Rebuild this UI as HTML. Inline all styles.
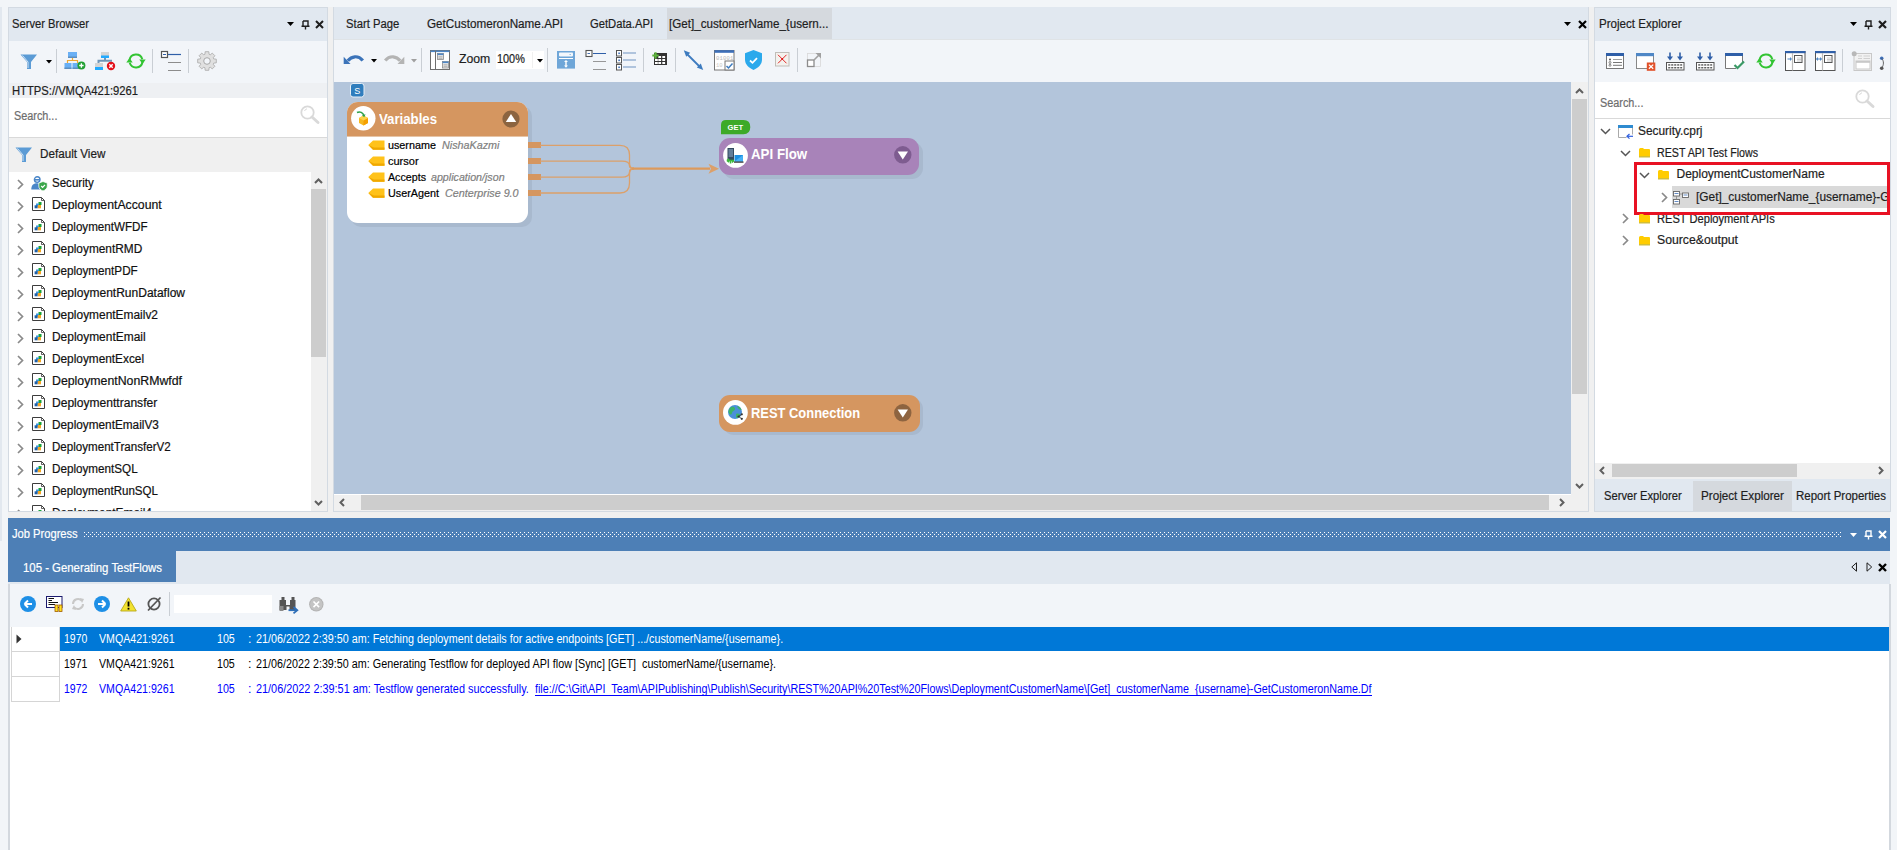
<!DOCTYPE html>
<html><head><meta charset="utf-8">
<style>
*{box-sizing:border-box;margin:0;padding:0}
html,body{width:1897px;height:850px;overflow:hidden;background:#f0f0f0;font-family:"Liberation Sans",sans-serif;font-size:12px;color:#1e1e1e;position:relative}
.a{position:absolute}
.t{position:absolute;white-space:pre}
svg{position:absolute;overflow:visible}
</style></head><body>
<div class="a" style="left:0px;top:0px;width:1897px;height:850px;background:#f2f5f8;"></div>
<div class="a" style="left:0px;top:7px;width:2px;height:534px;background:#e2e8ef;"></div>
<div class="a" style="left:8px;top:512px;width:1882px;height:6px;background:#f0f0f0;"></div>
<div class="a" style="left:328px;top:7px;width:5px;height:505px;background:#f0f0f0;"></div>
<div class="a" style="left:1589px;top:7px;width:5px;height:505px;background:#f0f0f0;"></div>
<div class="a" style="left:8px;top:7px;width:320px;height:505px;background:#f0f0f0;border:1px solid #d3dae2"></div>
<div class="a" style="left:9px;top:8px;width:318px;height:33px;background:#e1e8f0;"></div>
<div class="a" style="left:9px;top:41px;width:318px;height:42px;background:#f2f5f9;"></div>
<div class="a" style="left:9px;top:83px;width:318px;height:15px;background:#eef0f3;"></div>
<div class="a" style="left:9px;top:98px;width:318px;height:39px;background:#ffffff;"></div>
<div class="a" style="left:9px;top:137px;width:318px;height:1px;background:#d9d9d9;"></div>
<div class="a" style="left:9px;top:138px;width:318px;height:34px;background:#f0f0f0;"></div>
<div class="a" style="left:9px;top:172px;width:302px;height:339px;background:#ffffff;"></div>
<div class="a" style="left:311px;top:172px;width:16px;height:339px;background:#f0f0f0;"></div>
<div class="a" style="left:311px;top:189px;width:15px;height:168px;background:#cdcdcd;"></div>
<div class="t" style="left:12.00px;top:17.84px;font-size:12px;line-height:12px;color:#1e1e1e;-webkit-text-stroke:0.2px currentColor;transform:scaleX(0.9312);transform-origin:0 0;">Server Browser</div>
<div class="t" style="left:12.00px;top:84.84px;font-size:12px;line-height:12px;color:#1e1e1e;-webkit-text-stroke:0.2px currentColor;transform:scaleX(0.9352);transform-origin:0 0;">HTTPS://VMQA421:9261</div>
<div class="t" style="left:14.30px;top:109.84px;font-size:12px;line-height:12px;color:#6d6d6d;-webkit-text-stroke:0.2px currentColor;transform:scaleX(0.9036);transform-origin:0 0;">Search...</div>
<div class="t" style="left:40.40px;top:148.14px;font-size:12px;line-height:12px;color:#1e1e1e;-webkit-text-stroke:0.2px currentColor;transform:scaleX(0.9738);transform-origin:0 0;">Default View</div>
<div class="a" style="left:0;top:0;width:1897px;height:850px;clip-path:inset(172px 1586px 339px 9px)">
<div class="t" style="left:52.20px;top:177.24px;font-size:12px;line-height:12px;color:#111111;-webkit-text-stroke:0.2px currentColor;transform:scaleX(0.9617);transform-origin:0 0;">Security</div>
<div class="t" style="left:52.20px;top:199.24px;font-size:12px;line-height:12px;color:#111111;-webkit-text-stroke:0.2px currentColor;transform:scaleX(1.0215);transform-origin:0 0;">DeploymentAccount</div>
<div class="t" style="left:52.20px;top:221.24px;font-size:12px;line-height:12px;color:#111111;-webkit-text-stroke:0.2px currentColor;transform:scaleX(0.9687);transform-origin:0 0;">DeploymentWFDF</div>
<div class="t" style="left:52.20px;top:243.24px;font-size:12px;line-height:12px;color:#111111;-webkit-text-stroke:0.2px currentColor;transform:scaleX(0.9873);transform-origin:0 0;">DeploymentRMD</div>
<div class="t" style="left:52.20px;top:265.24px;font-size:12px;line-height:12px;color:#111111;-webkit-text-stroke:0.2px currentColor;transform:scaleX(0.9735);transform-origin:0 0;">DeploymentPDF</div>
<div class="t" style="left:52.20px;top:287.24px;font-size:12px;line-height:12px;color:#111111;-webkit-text-stroke:0.2px currentColor;transform:scaleX(1.0020);transform-origin:0 0;">DeploymentRunDataflow</div>
<div class="t" style="left:52.20px;top:309.24px;font-size:12px;line-height:12px;color:#111111;-webkit-text-stroke:0.2px currentColor;transform:scaleX(0.9933);transform-origin:0 0;">DeploymentEmailv2</div>
<div class="t" style="left:52.20px;top:331.24px;font-size:12px;line-height:12px;color:#111111;-webkit-text-stroke:0.2px currentColor;transform:scaleX(0.9952);transform-origin:0 0;">DeploymentEmail</div>
<div class="t" style="left:52.20px;top:353.24px;font-size:12px;line-height:12px;color:#111111;-webkit-text-stroke:0.2px currentColor;transform:scaleX(0.9853);transform-origin:0 0;">DeploymentExcel</div>
<div class="t" style="left:52.20px;top:375.24px;font-size:12px;line-height:12px;color:#111111;-webkit-text-stroke:0.2px currentColor;transform:scaleX(1.0259);transform-origin:0 0;">DeploymentNonRMwfdf</div>
<div class="t" style="left:52.20px;top:397.24px;font-size:12px;line-height:12px;color:#111111;-webkit-text-stroke:0.2px currentColor;transform:scaleX(1.0046);transform-origin:0 0;">Deploymenttransfer</div>
<div class="t" style="left:52.20px;top:419.24px;font-size:12px;line-height:12px;color:#111111;-webkit-text-stroke:0.2px currentColor;transform:scaleX(0.9824);transform-origin:0 0;">DeploymentEmailV3</div>
<div class="t" style="left:52.20px;top:441.24px;font-size:12px;line-height:12px;color:#111111;-webkit-text-stroke:0.2px currentColor;transform:scaleX(0.9654);transform-origin:0 0;">DeploymentTransferV2</div>
<div class="t" style="left:52.20px;top:463.24px;font-size:12px;line-height:12px;color:#111111;-webkit-text-stroke:0.2px currentColor;transform:scaleX(0.9733);transform-origin:0 0;">DeploymentSQL</div>
<div class="t" style="left:52.20px;top:485.24px;font-size:12px;line-height:12px;color:#111111;-webkit-text-stroke:0.2px currentColor;transform:scaleX(0.9631);transform-origin:0 0;">DeploymentRunSQL</div>
<div class="t" style="left:52.20px;top:507.24px;font-size:12px;line-height:12px;color:#111111;-webkit-text-stroke:0.2px currentColor;transform:scaleX(0.9929);transform-origin:0 0;">DeploymentEmail4</div>
</div>
<div class="a" style="left:333px;top:7px;width:256px;height:505px;background:#f0f0f0;width:1256px;border:1px solid #d3dae2;border-top:none"></div>
<div class="a" style="left:334px;top:7px;width:1254px;height:33px;background:#e1e8f0;"></div>
<div class="a" style="left:334px;top:39px;width:1254px;height:1px;background:#dfe3e6;"></div>
<div class="a" style="left:667px;top:8px;width:165px;height:31px;background:#d5d9de;"></div>
<div class="a" style="left:334px;top:40px;width:1254px;height:42px;background:#f2f5f9;"></div>
<div class="a" style="left:334px;top:82px;width:1237px;height:412px;background:#b3c5db;"></div>
<div class="a" style="left:334px;top:494px;width:1237px;height:1px;background:#ffffff;"></div>
<div class="a" style="left:1571px;top:82px;width:17px;height:429px;background:#f0f0f0;"></div>
<div class="a" style="left:1572px;top:99px;width:15px;height:295px;background:#cdcdcd;"></div>
<div class="a" style="left:334px;top:495px;width:1237px;height:16px;background:#f0f0f0;"></div>
<div class="a" style="left:361px;top:495px;width:1188px;height:15px;background:#cdcdcd;"></div>
<div class="t" style="left:345.90px;top:17.84px;font-size:12px;line-height:12px;color:#1e1e1e;-webkit-text-stroke:0.2px currentColor;transform:scaleX(0.9382);transform-origin:0 0;">Start Page</div>
<div class="t" style="left:426.50px;top:17.84px;font-size:12px;line-height:12px;color:#1e1e1e;-webkit-text-stroke:0.2px currentColor;transform:scaleX(0.9757);transform-origin:0 0;">GetCustomeronName.API</div>
<div class="t" style="left:589.90px;top:17.84px;font-size:12px;line-height:12px;color:#1e1e1e;-webkit-text-stroke:0.2px currentColor;transform:scaleX(0.9351);transform-origin:0 0;">GetData.API</div>
<div class="t" style="left:669.40px;top:17.84px;font-size:12px;line-height:12px;color:#1e1e1e;-webkit-text-stroke:0.2px currentColor;transform:scaleX(0.9681);transform-origin:0 0;">[Get]_customerName_{usern...</div>
<div class="t" style="left:458.90px;top:53.34px;font-size:12px;line-height:12px;color:#1e1e1e;-webkit-text-stroke:0.2px currentColor;transform:scaleX(1.0200);transform-origin:0 0;">Zoom</div>
<div class="a" style="left:496px;top:51px;width:48px;height:18px;background:#ffffff;"></div>
<div class="t" style="left:497.40px;top:53.34px;font-size:12px;line-height:12px;color:#1e1e1e;-webkit-text-stroke:0.2px currentColor;transform:scaleX(0.9054);transform-origin:0 0;">100%</div>
<div class="a" style="left:1594px;top:7px;width:297px;height:505px;background:#f0f0f0;border:1px solid #d3dae2"></div>
<div class="a" style="left:1595px;top:8px;width:295px;height:33px;background:#e1e8f0;"></div>
<div class="a" style="left:1595px;top:41px;width:295px;height:41px;background:#f2f5f9;"></div>
<div class="a" style="left:1595px;top:82px;width:295px;height:36px;background:#ffffff;"></div>
<div class="a" style="left:1595px;top:118px;width:295px;height:1px;background:#d9d9d9;"></div>
<div class="a" style="left:1595px;top:119px;width:295px;height:344px;background:#ffffff;"></div>
<div class="a" style="left:1595px;top:463px;width:295px;height:16px;background:#f0f0f0;"></div>
<div class="a" style="left:1612px;top:464px;width:185px;height:13px;background:#cdcdcd;"></div>
<div class="a" style="left:1595px;top:479px;width:295px;height:32px;background:#e1e8f0;"></div>
<div class="a" style="left:1693px;top:481px;width:99px;height:30px;background:#d5d9de;"></div>
<div class="t" style="left:1598.50px;top:17.84px;font-size:12px;line-height:12px;color:#1e1e1e;-webkit-text-stroke:0.2px currentColor;transform:scaleX(0.9663);transform-origin:0 0;">Project Explorer</div>
<div class="t" style="left:1600.00px;top:96.64px;font-size:12px;line-height:12px;color:#6d6d6d;-webkit-text-stroke:0.2px currentColor;transform:scaleX(0.9036);transform-origin:0 0;">Search...</div>
<div class="a" style="left:1672px;top:186px;width:215px;height:22px;background:#d9d9d9;"></div>
<div class="a" style="left:0;top:0;width:1897px;height:850px;clip-path:inset(119px 10px 387px 1595px)">
<div class="t" style="left:1638.10px;top:124.84px;font-size:12px;line-height:12px;color:#1e1e1e;-webkit-text-stroke:0.2px currentColor;transform:scaleX(0.9902);transform-origin:0 0;">Security.cprj</div>
<div class="t" style="left:1657.40px;top:146.64px;font-size:12px;line-height:12px;color:#1e1e1e;-webkit-text-stroke:0.2px currentColor;transform:scaleX(0.8890);transform-origin:0 0;">REST API Test Flows</div>
<div class="t" style="left:1676.50px;top:168.34px;font-size:12px;line-height:12px;color:#1e1e1e;-webkit-text-stroke:0.2px currentColor;">DeploymentCustomerName</div>
<div class="t" style="left:1695.60px;top:190.84px;font-size:12px;line-height:12px;color:#1e1e1e;-webkit-text-stroke:0.2px currentColor;transform:scaleX(0.9896);transform-origin:0 0;">[Get]_customerName_{username}-Ge</div>
<div class="t" style="left:1657.40px;top:212.64px;font-size:12px;line-height:12px;color:#1e1e1e;-webkit-text-stroke:0.2px currentColor;transform:scaleX(0.9255);transform-origin:0 0;">REST Deployment APIs</div>
<div class="t" style="left:1657.40px;top:234.34px;font-size:12px;line-height:12px;color:#1e1e1e;-webkit-text-stroke:0.2px currentColor;transform:scaleX(1.0203);transform-origin:0 0;">Source&amp;output</div>
</div>
<div class="a" style="left:1634px;top:162px;width:256px;height:53px;background:transparent;border:3px solid #e81123"></div>
<div class="t" style="left:1604.00px;top:489.84px;font-size:12px;line-height:12px;color:#1e1e1e;-webkit-text-stroke:0.2px currentColor;transform:scaleX(0.9319);transform-origin:0 0;">Server Explorer</div>
<div class="t" style="left:1701.00px;top:489.84px;font-size:12px;line-height:12px;color:#1e1e1e;-webkit-text-stroke:0.2px currentColor;transform:scaleX(0.9722);transform-origin:0 0;">Project Explorer</div>
<div class="t" style="left:1796.40px;top:489.84px;font-size:12px;line-height:12px;color:#1e1e1e;-webkit-text-stroke:0.2px currentColor;transform:scaleX(0.9570);transform-origin:0 0;">Report Properties</div>
<div class="a" style="left:8px;top:518px;width:1882px;height:332px;background:#ffffff;"></div>
<div class="a" style="left:8px;top:518px;width:1882px;height:33px;background:#4d7fb6;"></div>
<div class="a" style="left:8px;top:551px;width:1882px;height:33px;background:#e1e8f0;"></div>
<div class="a" style="left:8px;top:551px;width:168px;height:31px;background:#4d7fb6;"></div>
<div class="a" style="left:8px;top:584px;width:1882px;height:43px;background:#f2f5f9;"></div>
<div class="a" style="left:8px;top:584px;width:2px;height:266px;background:#d3d8de;"></div>
<div class="a" style="left:1889px;top:584px;width:2px;height:266px;background:#d3d8de;"></div>
<div class="t" style="left:12.00px;top:527.84px;font-size:12px;line-height:12px;color:#ffffff;-webkit-text-stroke:0.2px currentColor;transform:scaleX(0.9292);transform-origin:0 0;">Job Progress</div>
<div class="t" style="left:23.00px;top:561.94px;font-size:12px;line-height:12px;color:#ffffff;-webkit-text-stroke:0.2px currentColor;transform:scaleX(0.9486);transform-origin:0 0;">105 - Generating TestFlows</div>
<div class="a" style="left:174px;top:595px;width:98px;height:18px;background:#ffffff;"></div>
<div class="a" style="left:11px;top:627px;width:1878px;height:24px;background:#ffffff;"></div>
<div class="a" style="left:60px;top:627px;width:1829px;height:24px;background:#0078d7;"></div>
<div class="a" style="left:11px;top:651px;width:49px;height:1px;background:#d5d5d5;"></div>
<div class="a" style="left:11px;top:676px;width:49px;height:1px;background:#d5d5d5;"></div>
<div class="a" style="left:11px;top:701px;width:49px;height:1px;background:#d5d5d5;"></div>
<div class="a" style="left:59px;top:627px;width:1px;height:74px;background:#d5d5d5;"></div>
<div class="a" style="left:11px;top:627px;width:1px;height:74px;background:#d5d5d5;"></div>
<div class="t" style="left:63.70px;top:632.82px;font-size:12.5px;line-height:12.5px;color:#ffffff;transform:scaleX(0.8378);transform-origin:0 0;">1970</div>
<div class="t" style="left:98.80px;top:632.82px;font-size:12.5px;line-height:12.5px;color:#ffffff;transform:scaleX(0.8499);transform-origin:0 0;">VMQA421:9261</div>
<div class="t" style="left:217.40px;top:632.82px;font-size:12.5px;line-height:12.5px;color:#ffffff;transform:scaleX(0.8533);transform-origin:0 0;">105</div>
<div class="t" style="left:248.00px;top:632.82px;font-size:12.5px;line-height:12.5px;color:#ffffff;">:</div>
<div class="t" style="left:256.20px;top:632.82px;font-size:12.5px;line-height:12.5px;color:#ffffff;transform:scaleX(0.8611);transform-origin:0 0;">21/06/2022 2:39:50 am: Fetching deployment details for active endpoints [GET] .../customerName/{username}.</div>
<div class="t" style="left:63.70px;top:657.82px;font-size:12.5px;line-height:12.5px;color:#000000;transform:scaleX(0.8378);transform-origin:0 0;">1971</div>
<div class="t" style="left:98.80px;top:657.82px;font-size:12.5px;line-height:12.5px;color:#000000;transform:scaleX(0.8499);transform-origin:0 0;">VMQA421:9261</div>
<div class="t" style="left:217.40px;top:657.82px;font-size:12.5px;line-height:12.5px;color:#000000;transform:scaleX(0.8533);transform-origin:0 0;">105</div>
<div class="t" style="left:248.00px;top:657.82px;font-size:12.5px;line-height:12.5px;color:#000000;">:</div>
<div class="t" style="left:256.20px;top:657.82px;font-size:12.5px;line-height:12.5px;color:#000000;transform:scaleX(0.8617);transform-origin:0 0;">21/06/2022 2:39:50 am: Generating Testflow for deployed API flow [Sync] [GET]  customerName/{username}.</div>
<div class="t" style="left:63.70px;top:682.82px;font-size:12.5px;line-height:12.5px;color:#0000ff;transform:scaleX(0.8378);transform-origin:0 0;">1972</div>
<div class="t" style="left:98.80px;top:682.82px;font-size:12.5px;line-height:12.5px;color:#0000ff;transform:scaleX(0.8499);transform-origin:0 0;">VMQA421:9261</div>
<div class="t" style="left:217.40px;top:682.82px;font-size:12.5px;line-height:12.5px;color:#0000ff;transform:scaleX(0.8533);transform-origin:0 0;">105</div>
<div class="t" style="left:248.00px;top:682.82px;font-size:12.5px;line-height:12.5px;color:#0000ff;">:</div>
<div class="t" style="left:256.20px;top:682.82px;font-size:12.5px;line-height:12.5px;color:#0000ff;transform:scaleX(0.8698);transform-origin:0 0;">21/06/2022 2:39:51 am: Testflow generated successfully.</div>
<div class="t" style="left:535.00px;top:682.82px;font-size:12.5px;line-height:12.5px;color:#0000ff;transform:scaleX(0.8589);transform-origin:0 0;">file://C:\Git\API_Team\APIPublishing\Publish\Security\REST%20API%20Test%20Flows\DeploymentCustomerName\[Get]_customerName_{username}-GetCustomeronName.Df</div>
<div class="a" style="left:535px;top:695px;width:837px;height:1px;background:#0000ff;"></div>
<svg style="left:287px;top:22px;" width="7" height="4" viewBox="0 0 7 4"><path d="M0,0 H7 L3.5,4 Z" fill="#000"/></svg>
<svg style="left:300.5px;top:19.5px;" width="9" height="10" viewBox="0 0 9 10"><path d="M2,1 H7 V6 M2,1 V6 M0.5,6.2 H8.5 M4.5,6.2 V9.5" stroke="#1e1e1e" stroke-width="1.4" fill="none"/></svg>
<svg style="left:315px;top:20px;" width="9" height="9" viewBox="0 0 9 9"><path d="M1,1 L8,8 M8,1 L1,8" stroke="#1e1e1e" stroke-width="2"/></svg>
<svg style="left:20px;top:54px;" width="18" height="16" viewBox="0 0 18 16"><g transform="scale(1.0)"><path d="M0.5,0.5 H17 L11,8 V15 H7 V8 Z" fill="#5b9bd5"/><path d="M2.5,1.5 L8,8 V14" stroke="#ffffff" stroke-width="0.9" fill="none" opacity="0.8"/></g></svg>
<svg style="left:45.5px;top:60px;" width="6" height="3.5" viewBox="0 0 6 3.5"><path d="M0,0 H6 L3.0,3.5 Z" fill="#000"/></svg>
<div class="a" style="left:56px;top:49px;width:1px;height:24px;background:#c9ced4;"></div>
<svg style="left:64px;top:51px;" width="22" height="19" viewBox="0 0 22 19"><rect x="4" y="1" width="9" height="6" fill="#6ab0f5"/><rect x="4" y="5.5" width="9" height="1.5" fill="#5c8fc0"/><path d="M8.5,7 V9.5 M3.5,12 V9.5 H13.5 V12" stroke="#f0a830" stroke-width="1.2" fill="none"/><rect x="0.5" y="12" width="7" height="6" fill="#6ab0f5"/><rect x="0.5" y="16.5" width="7" height="1.5" fill="#5c8fc0"/><rect x="8.5" y="12" width="7" height="6" fill="#6ab0f5"/><rect x="8.5" y="16.5" width="7" height="1.5" fill="#5c8fc0"/><circle cx="17.4" cy="14.5" r="4" fill="#22a033"/><path d="M15.2,14.5 H19.6 M17.4,12.3 V16.7" stroke="#fff" stroke-width="1.3"/></svg>
<svg style="left:94px;top:51px;" width="22" height="20" viewBox="0 0 22 20"><rect x="7" y="1" width="8" height="5" fill="#d4d4d4"/><rect x="7" y="4.5" width="8" height="2.5" fill="#22aaff"/><path d="M11,7 V9 M4.5,12 V9.8 H18" stroke="#7096b8" stroke-width="2" fill="none"/><rect x="1" y="12" width="8" height="4.5" fill="#d4d4d4"/><rect x="1" y="16" width="8" height="3" fill="#22aaff"/><circle cx="17" cy="15" r="4.2" fill="#e30f1a"/><path d="M15.3,13.3 L18.7,16.7 M18.7,13.3 L15.3,16.7" stroke="#fff" stroke-width="1.4"/></svg>
<svg style="left:125.5px;top:52px;" width="20" height="18" viewBox="0 0 20 18"><path d="M3.5,8 A6.6,6.6 0 0 1 16.3,7.2" stroke="#33c433" stroke-width="2" fill="none"/><path d="M16.5,10 A6.6,6.6 0 0 1 3.7,10.8" stroke="#33c433" stroke-width="2" fill="none"/><path d="M13.3,7.6 L19.7,7.6 L16.5,12 Z" fill="#33c433"/><path d="M0.3,10.4 L6.7,10.4 L3.5,6 Z" fill="#33c433"/></svg>
<div class="a" style="left:152px;top:49px;width:1px;height:24px;background:#c9ced4;"></div>
<svg style="left:160px;top:50px;" width="22" height="22" viewBox="0 0 22 22"><rect x="1.5" y="1.5" width="6" height="6" fill="#fff" stroke="#555" stroke-width="1.2"/><path d="M3,4.5 H6" stroke="#2f5fa8" stroke-width="1"/><path d="M8,4.5 H21" stroke="#2f5fa8" stroke-width="1.2"/><path d="M8,12.5 H21 M8,20.5 H21" stroke="#8c8c8c" stroke-width="1.2"/></svg>
<div class="a" style="left:188px;top:49px;width:1px;height:24px;background:#c9ced4;"></div>
<svg style="left:196.5px;top:51px;" width="20.0" height="20.0" viewBox="0 0 20.0 20.0"><path d="M16.68,7.90 L19.32,8.16 L19.32,11.84 L16.68,12.10 L16.21,13.24 L17.89,15.29 L15.29,17.89 L13.24,16.21 L12.10,16.68 L11.84,19.32 L8.16,19.32 L7.90,16.68 L6.76,16.21 L4.71,17.89 L2.11,15.29 L3.79,13.24 L3.32,12.10 L0.68,11.84 L0.68,8.16 L3.32,7.90 L3.79,6.76 L2.11,4.71 L4.71,2.11 L6.76,3.79 L7.90,3.32 L8.16,0.68 L11.84,0.68 L12.10,3.32 L13.24,3.79 L15.29,2.11 L17.89,4.71 L16.21,6.76 Z" fill="#e0e0e0" stroke="#a8a8a8" stroke-width="0.8"/><circle cx="10.0" cy="10.0" r="3.3" fill="#f2f5f9" stroke="#a8a8a8" stroke-width="1"/></svg>
<svg style="left:300px;top:105px;" width="20" height="19" viewBox="0 0 20 19"><circle cx="7.5" cy="7.5" r="6.2" fill="none" stroke="#d9d9d9" stroke-width="1.8"/><path d="M12,12 L18,17.5" stroke="#d9d9d9" stroke-width="3" stroke-linecap="round"/><path d="M4.5,6 A3.5,3.5 0 0 1 7,3.8" stroke="#d9d9d9" stroke-width="1" fill="none"/></svg>
<svg style="left:14.5px;top:147px;" width="18" height="16" viewBox="0 0 18 16"><g transform="scale(1.0)"><path d="M0.5,0.5 H17 L11,8 V15 H7 V8 Z" fill="#5b9bd5"/><path d="M2.5,1.5 L8,8 V14" stroke="#ffffff" stroke-width="0.9" fill="none" opacity="0.8"/></g></svg>
<div class="a" style="left:0;top:0;width:1897px;height:850px;clip-path:inset(172px 1586px 339px 9px)">
<svg style="left:16.5px;top:179.0px;" width="7" height="11" viewBox="0 0 7 11"><path d="M1,1 L5.5,5.5 L1,10" stroke="#8a8a8a" stroke-width="1.7" fill="none"/></svg>
<svg style="left:30.5px;top:176px;" width="17" height="15" viewBox="0 0 17 15"><circle cx="6.2" cy="3.6" r="2.8" fill="none" stroke="#4a86c8" stroke-width="1.4"/><path d="M3.5,3.8 H9" stroke="#4a86c8" stroke-width="1.6"/><path d="M0.3,13.5 C0.3,8.5 3,7.2 6.2,7.2 C9,7.2 10.5,8 11,9 V13.5 Z" fill="#4a86c8"/><path d="M12,5.5 L16.3,7 V10 C16.3,12.5 14.5,14 12,15 C9.5,14 7.8,12.5 7.8,10 V7 Z" fill="#3aa64a" stroke="#fff" stroke-width="0.8"/><path d="M10.2,10 L11.6,11.4 L14,8.8" stroke="#fff" stroke-width="1.2" fill="none"/></svg>
<svg style="left:16.5px;top:201.0px;" width="7" height="11" viewBox="0 0 7 11"><path d="M1,1 L5.5,5.5 L1,10" stroke="#8a8a8a" stroke-width="1.7" fill="none"/></svg>
<svg style="left:31.5px;top:197px;" width="14" height="14" viewBox="0 0 14 14"><path d="M0.5,0.5 H9.5 L12.5,3.5 V13.5 H0.5 Z" fill="#fff" stroke="#3c3c3c" stroke-width="1"/><path d="M9.5,0.5 V3.5 H12.5" fill="none" stroke="#3c3c3c" stroke-width="0.8"/><rect x="6.5" y="5" width="3" height="3" fill="#1aa33a"/><rect x="4" y="6.5" width="3" height="3" fill="#3b9ae0"/><rect x="5.7" y="8" width="3.3" height="3.3" fill="#f5a623"/><rect x="2.6" y="8.3" width="3" height="3" fill="#1f5fa8"/></svg>
<svg style="left:16.5px;top:223.0px;" width="7" height="11" viewBox="0 0 7 11"><path d="M1,1 L5.5,5.5 L1,10" stroke="#8a8a8a" stroke-width="1.7" fill="none"/></svg>
<svg style="left:31.5px;top:219px;" width="14" height="14" viewBox="0 0 14 14"><path d="M0.5,0.5 H9.5 L12.5,3.5 V13.5 H0.5 Z" fill="#fff" stroke="#3c3c3c" stroke-width="1"/><path d="M9.5,0.5 V3.5 H12.5" fill="none" stroke="#3c3c3c" stroke-width="0.8"/><rect x="6.5" y="5" width="3" height="3" fill="#1aa33a"/><rect x="4" y="6.5" width="3" height="3" fill="#3b9ae0"/><rect x="5.7" y="8" width="3.3" height="3.3" fill="#f5a623"/><rect x="2.6" y="8.3" width="3" height="3" fill="#1f5fa8"/></svg>
<svg style="left:16.5px;top:245.0px;" width="7" height="11" viewBox="0 0 7 11"><path d="M1,1 L5.5,5.5 L1,10" stroke="#8a8a8a" stroke-width="1.7" fill="none"/></svg>
<svg style="left:31.5px;top:241px;" width="14" height="14" viewBox="0 0 14 14"><path d="M0.5,0.5 H9.5 L12.5,3.5 V13.5 H0.5 Z" fill="#fff" stroke="#3c3c3c" stroke-width="1"/><path d="M9.5,0.5 V3.5 H12.5" fill="none" stroke="#3c3c3c" stroke-width="0.8"/><rect x="6.5" y="5" width="3" height="3" fill="#1aa33a"/><rect x="4" y="6.5" width="3" height="3" fill="#3b9ae0"/><rect x="5.7" y="8" width="3.3" height="3.3" fill="#f5a623"/><rect x="2.6" y="8.3" width="3" height="3" fill="#1f5fa8"/></svg>
<svg style="left:16.5px;top:267.0px;" width="7" height="11" viewBox="0 0 7 11"><path d="M1,1 L5.5,5.5 L1,10" stroke="#8a8a8a" stroke-width="1.7" fill="none"/></svg>
<svg style="left:31.5px;top:263px;" width="14" height="14" viewBox="0 0 14 14"><path d="M0.5,0.5 H9.5 L12.5,3.5 V13.5 H0.5 Z" fill="#fff" stroke="#3c3c3c" stroke-width="1"/><path d="M9.5,0.5 V3.5 H12.5" fill="none" stroke="#3c3c3c" stroke-width="0.8"/><rect x="6.5" y="5" width="3" height="3" fill="#1aa33a"/><rect x="4" y="6.5" width="3" height="3" fill="#3b9ae0"/><rect x="5.7" y="8" width="3.3" height="3.3" fill="#f5a623"/><rect x="2.6" y="8.3" width="3" height="3" fill="#1f5fa8"/></svg>
<svg style="left:16.5px;top:289.0px;" width="7" height="11" viewBox="0 0 7 11"><path d="M1,1 L5.5,5.5 L1,10" stroke="#8a8a8a" stroke-width="1.7" fill="none"/></svg>
<svg style="left:31.5px;top:285px;" width="14" height="14" viewBox="0 0 14 14"><path d="M0.5,0.5 H9.5 L12.5,3.5 V13.5 H0.5 Z" fill="#fff" stroke="#3c3c3c" stroke-width="1"/><path d="M9.5,0.5 V3.5 H12.5" fill="none" stroke="#3c3c3c" stroke-width="0.8"/><rect x="6.5" y="5" width="3" height="3" fill="#1aa33a"/><rect x="4" y="6.5" width="3" height="3" fill="#3b9ae0"/><rect x="5.7" y="8" width="3.3" height="3.3" fill="#f5a623"/><rect x="2.6" y="8.3" width="3" height="3" fill="#1f5fa8"/></svg>
<svg style="left:16.5px;top:311.0px;" width="7" height="11" viewBox="0 0 7 11"><path d="M1,1 L5.5,5.5 L1,10" stroke="#8a8a8a" stroke-width="1.7" fill="none"/></svg>
<svg style="left:31.5px;top:307px;" width="14" height="14" viewBox="0 0 14 14"><path d="M0.5,0.5 H9.5 L12.5,3.5 V13.5 H0.5 Z" fill="#fff" stroke="#3c3c3c" stroke-width="1"/><path d="M9.5,0.5 V3.5 H12.5" fill="none" stroke="#3c3c3c" stroke-width="0.8"/><rect x="6.5" y="5" width="3" height="3" fill="#1aa33a"/><rect x="4" y="6.5" width="3" height="3" fill="#3b9ae0"/><rect x="5.7" y="8" width="3.3" height="3.3" fill="#f5a623"/><rect x="2.6" y="8.3" width="3" height="3" fill="#1f5fa8"/></svg>
<svg style="left:16.5px;top:333.0px;" width="7" height="11" viewBox="0 0 7 11"><path d="M1,1 L5.5,5.5 L1,10" stroke="#8a8a8a" stroke-width="1.7" fill="none"/></svg>
<svg style="left:31.5px;top:329px;" width="14" height="14" viewBox="0 0 14 14"><path d="M0.5,0.5 H9.5 L12.5,3.5 V13.5 H0.5 Z" fill="#fff" stroke="#3c3c3c" stroke-width="1"/><path d="M9.5,0.5 V3.5 H12.5" fill="none" stroke="#3c3c3c" stroke-width="0.8"/><rect x="6.5" y="5" width="3" height="3" fill="#1aa33a"/><rect x="4" y="6.5" width="3" height="3" fill="#3b9ae0"/><rect x="5.7" y="8" width="3.3" height="3.3" fill="#f5a623"/><rect x="2.6" y="8.3" width="3" height="3" fill="#1f5fa8"/></svg>
<svg style="left:16.5px;top:355.0px;" width="7" height="11" viewBox="0 0 7 11"><path d="M1,1 L5.5,5.5 L1,10" stroke="#8a8a8a" stroke-width="1.7" fill="none"/></svg>
<svg style="left:31.5px;top:351px;" width="14" height="14" viewBox="0 0 14 14"><path d="M0.5,0.5 H9.5 L12.5,3.5 V13.5 H0.5 Z" fill="#fff" stroke="#3c3c3c" stroke-width="1"/><path d="M9.5,0.5 V3.5 H12.5" fill="none" stroke="#3c3c3c" stroke-width="0.8"/><rect x="6.5" y="5" width="3" height="3" fill="#1aa33a"/><rect x="4" y="6.5" width="3" height="3" fill="#3b9ae0"/><rect x="5.7" y="8" width="3.3" height="3.3" fill="#f5a623"/><rect x="2.6" y="8.3" width="3" height="3" fill="#1f5fa8"/></svg>
<svg style="left:16.5px;top:377.0px;" width="7" height="11" viewBox="0 0 7 11"><path d="M1,1 L5.5,5.5 L1,10" stroke="#8a8a8a" stroke-width="1.7" fill="none"/></svg>
<svg style="left:31.5px;top:373px;" width="14" height="14" viewBox="0 0 14 14"><path d="M0.5,0.5 H9.5 L12.5,3.5 V13.5 H0.5 Z" fill="#fff" stroke="#3c3c3c" stroke-width="1"/><path d="M9.5,0.5 V3.5 H12.5" fill="none" stroke="#3c3c3c" stroke-width="0.8"/><rect x="6.5" y="5" width="3" height="3" fill="#1aa33a"/><rect x="4" y="6.5" width="3" height="3" fill="#3b9ae0"/><rect x="5.7" y="8" width="3.3" height="3.3" fill="#f5a623"/><rect x="2.6" y="8.3" width="3" height="3" fill="#1f5fa8"/></svg>
<svg style="left:16.5px;top:399.0px;" width="7" height="11" viewBox="0 0 7 11"><path d="M1,1 L5.5,5.5 L1,10" stroke="#8a8a8a" stroke-width="1.7" fill="none"/></svg>
<svg style="left:31.5px;top:395px;" width="14" height="14" viewBox="0 0 14 14"><path d="M0.5,0.5 H9.5 L12.5,3.5 V13.5 H0.5 Z" fill="#fff" stroke="#3c3c3c" stroke-width="1"/><path d="M9.5,0.5 V3.5 H12.5" fill="none" stroke="#3c3c3c" stroke-width="0.8"/><rect x="6.5" y="5" width="3" height="3" fill="#1aa33a"/><rect x="4" y="6.5" width="3" height="3" fill="#3b9ae0"/><rect x="5.7" y="8" width="3.3" height="3.3" fill="#f5a623"/><rect x="2.6" y="8.3" width="3" height="3" fill="#1f5fa8"/></svg>
<svg style="left:16.5px;top:421.0px;" width="7" height="11" viewBox="0 0 7 11"><path d="M1,1 L5.5,5.5 L1,10" stroke="#8a8a8a" stroke-width="1.7" fill="none"/></svg>
<svg style="left:31.5px;top:417px;" width="14" height="14" viewBox="0 0 14 14"><path d="M0.5,0.5 H9.5 L12.5,3.5 V13.5 H0.5 Z" fill="#fff" stroke="#3c3c3c" stroke-width="1"/><path d="M9.5,0.5 V3.5 H12.5" fill="none" stroke="#3c3c3c" stroke-width="0.8"/><rect x="6.5" y="5" width="3" height="3" fill="#1aa33a"/><rect x="4" y="6.5" width="3" height="3" fill="#3b9ae0"/><rect x="5.7" y="8" width="3.3" height="3.3" fill="#f5a623"/><rect x="2.6" y="8.3" width="3" height="3" fill="#1f5fa8"/></svg>
<svg style="left:16.5px;top:443.0px;" width="7" height="11" viewBox="0 0 7 11"><path d="M1,1 L5.5,5.5 L1,10" stroke="#8a8a8a" stroke-width="1.7" fill="none"/></svg>
<svg style="left:31.5px;top:439px;" width="14" height="14" viewBox="0 0 14 14"><path d="M0.5,0.5 H9.5 L12.5,3.5 V13.5 H0.5 Z" fill="#fff" stroke="#3c3c3c" stroke-width="1"/><path d="M9.5,0.5 V3.5 H12.5" fill="none" stroke="#3c3c3c" stroke-width="0.8"/><rect x="6.5" y="5" width="3" height="3" fill="#1aa33a"/><rect x="4" y="6.5" width="3" height="3" fill="#3b9ae0"/><rect x="5.7" y="8" width="3.3" height="3.3" fill="#f5a623"/><rect x="2.6" y="8.3" width="3" height="3" fill="#1f5fa8"/></svg>
<svg style="left:16.5px;top:465.0px;" width="7" height="11" viewBox="0 0 7 11"><path d="M1,1 L5.5,5.5 L1,10" stroke="#8a8a8a" stroke-width="1.7" fill="none"/></svg>
<svg style="left:31.5px;top:461px;" width="14" height="14" viewBox="0 0 14 14"><path d="M0.5,0.5 H9.5 L12.5,3.5 V13.5 H0.5 Z" fill="#fff" stroke="#3c3c3c" stroke-width="1"/><path d="M9.5,0.5 V3.5 H12.5" fill="none" stroke="#3c3c3c" stroke-width="0.8"/><rect x="6.5" y="5" width="3" height="3" fill="#1aa33a"/><rect x="4" y="6.5" width="3" height="3" fill="#3b9ae0"/><rect x="5.7" y="8" width="3.3" height="3.3" fill="#f5a623"/><rect x="2.6" y="8.3" width="3" height="3" fill="#1f5fa8"/></svg>
<svg style="left:16.5px;top:487.0px;" width="7" height="11" viewBox="0 0 7 11"><path d="M1,1 L5.5,5.5 L1,10" stroke="#8a8a8a" stroke-width="1.7" fill="none"/></svg>
<svg style="left:31.5px;top:483px;" width="14" height="14" viewBox="0 0 14 14"><path d="M0.5,0.5 H9.5 L12.5,3.5 V13.5 H0.5 Z" fill="#fff" stroke="#3c3c3c" stroke-width="1"/><path d="M9.5,0.5 V3.5 H12.5" fill="none" stroke="#3c3c3c" stroke-width="0.8"/><rect x="6.5" y="5" width="3" height="3" fill="#1aa33a"/><rect x="4" y="6.5" width="3" height="3" fill="#3b9ae0"/><rect x="5.7" y="8" width="3.3" height="3.3" fill="#f5a623"/><rect x="2.6" y="8.3" width="3" height="3" fill="#1f5fa8"/></svg>
<svg style="left:16.5px;top:509.0px;" width="7" height="11" viewBox="0 0 7 11"><path d="M1,1 L5.5,5.5 L1,10" stroke="#8a8a8a" stroke-width="1.7" fill="none"/></svg>
<svg style="left:31.5px;top:505px;" width="14" height="14" viewBox="0 0 14 14"><path d="M0.5,0.5 H9.5 L12.5,3.5 V13.5 H0.5 Z" fill="#fff" stroke="#3c3c3c" stroke-width="1"/><path d="M9.5,0.5 V3.5 H12.5" fill="none" stroke="#3c3c3c" stroke-width="0.8"/><rect x="6.5" y="5" width="3" height="3" fill="#1aa33a"/><rect x="4" y="6.5" width="3" height="3" fill="#3b9ae0"/><rect x="5.7" y="8" width="3.3" height="3.3" fill="#f5a623"/><rect x="2.6" y="8.3" width="3" height="3" fill="#1f5fa8"/></svg>
</div>
<svg style="left:1564px;top:22px;" width="7" height="4" viewBox="0 0 7 4"><path d="M0,0 H7 L3.5,4 Z" fill="#000"/></svg>
<svg style="left:1578px;top:20px;" width="9" height="9" viewBox="0 0 9 9"><path d="M1,1 L8,8 M8,1 L1,8" stroke="#000" stroke-width="2.2"/></svg>
<svg style="left:343px;top:53px;" width="21" height="12" viewBox="0 0 21 12"><path d="M0.7,11 V3.8 L7.5,11 Z" fill="#3b73b9"/><path d="M4.8,7.8 C8.5,3.2 15,1.8 19.8,7.5" stroke="#3b73b9" stroke-width="3.2" fill="none"/></svg>
<svg style="left:371px;top:59px;" width="6" height="3.5" viewBox="0 0 6 3.5"><path d="M0,0 H6 L3.0,3.5 Z" fill="#000"/></svg>
<svg style="left:384px;top:53px;" width="21" height="12" viewBox="0 0 21 12"><path d="M20.3,11 V3.8 L13.5,11 Z" fill="#b4b4b4"/><path d="M16.2,7.8 C12.5,3.2 6,1.8 1.2,7.5" stroke="#b4b4b4" stroke-width="3.2" fill="none"/></svg>
<svg style="left:411px;top:59px;" width="6" height="3.5" viewBox="0 0 6 3.5"><path d="M0,0 H6 L3.0,3.5 Z" fill="#a0a0a0"/></svg>
<div class="a" style="left:421px;top:48px;width:1px;height:24px;background:#c9ced4;"></div>
<svg style="left:430px;top:50px;" width="21" height="20" viewBox="0 0 21 20"><rect x="0.5" y="0.5" width="19" height="19" fill="#fff" stroke="#6e6e6e" stroke-width="1"/><rect x="0.5" y="0.5" width="19" height="1.6" fill="#4f87c6"/><path d="M5.5,1 V19.5" stroke="#6e6e6e" stroke-width="1"/><rect x="7.5" y="3.5" width="6" height="6" fill="#e8e8e8" stroke="#8a8a8a" stroke-width="0.8"/><rect x="7.5" y="3.5" width="6" height="1.6" fill="#4f87c6"/><path d="M8.5,6.8 H12.5 M8.5,8.3 H12.5" stroke="#8a8a8a" stroke-width="0.6"/><rect x="12.5" y="11.5" width="6" height="6.5" fill="#e8e8e8" stroke="#8a8a8a" stroke-width="0.8"/><rect x="12.5" y="11.5" width="6" height="1.6" fill="#4f87c6"/><path d="M13.5,14.8 H17.5 M13.5,16.3 H17.5" stroke="#8a8a8a" stroke-width="0.6"/></svg>
<svg style="left:536.5px;top:59px;" width="6" height="3.5" viewBox="0 0 6 3.5"><path d="M0,0 H6 L3.0,3.5 Z" fill="#000"/></svg>
<div class="a" style="left:532px;top:52px;width:1px;height:16px;background:#f0f0f0;"></div>
<div class="a" style="left:547px;top:48px;width:1px;height:24px;background:#c9ced4;"></div>
<svg style="left:557px;top:51px;" width="18" height="18" viewBox="0 0 18 18"><rect x="0" y="0" width="18" height="17.6" fill="#6fa6d8"/><rect x="2" y="1.6" width="14" height="3.8" rx="0.8" fill="#f4f8fc"/><path d="M12.3,3 L14,3 L13.15,4.3 Z" fill="#6fa6d8"/><rect x="2" y="7" width="14" height="1" fill="#fff"/><path d="M9,9 L11,11 H9.7 V14.5 H11 L9,16.8 L7,14.5 H8.3 V11 H7 Z" fill="#fff"/></svg>
<svg style="left:585px;top:50px;" width="22" height="21" viewBox="0 0 22 21"><rect x="1" y="0.5" width="6" height="6" fill="#fff" stroke="#555" stroke-width="1.1"/><path d="M2.5,3.5 H5" stroke="#2f5fa8" stroke-width="0.9"/><path d="M8,3.5 H21" stroke="#2f5fa8" stroke-width="1"/><path d="M8,11.5 H21 M8,19.5 H21" stroke="#8c8c8c" stroke-width="0.9"/></svg>
<svg style="left:615px;top:49px;" width="22" height="22" viewBox="0 0 22 22"><g stroke="#555" stroke-width="1" fill="#fff"><rect x="1.5" y="1.5" width="5" height="5.5"/><rect x="1.5" y="8.5" width="5" height="5.5"/><rect x="1.5" y="15.5" width="5" height="5.5"/></g><g fill="#3d6fb8"><rect x="3.3" y="3.5" width="1.6" height="1.6"/><rect x="3.3" y="10.5" width="1.6" height="1.6"/><rect x="3.3" y="17.5" width="1.6" height="1.6"/></g><path d="M8,4 H21 M8,11 H21 M8,18 H21" stroke="#9ab4d4" stroke-width="1.4"/></svg>
<div class="a" style="left:643px;top:48px;width:1px;height:24px;background:#c9ced4;"></div>
<svg style="left:651px;top:52px;" width="17" height="14" viewBox="0 0 17 14"><rect x="3" y="1" width="13" height="12" fill="#333"/><g fill="#fff"><rect x="7.3" y="4" width="2.8" height="2"/><rect x="11.3" y="4" width="2.8" height="2"/><rect x="4" y="7" width="2.8" height="2"/><rect x="7.3" y="7" width="2.8" height="2"/><rect x="11.3" y="7" width="2.8" height="2"/><rect x="4" y="10" width="2.8" height="2"/><rect x="7.3" y="10" width="2.8" height="2"/><rect x="11.3" y="10" width="2.8" height="2"/></g><path d="M4.5,0.3 V6.7 M1.3,3.5 H7.7" stroke="#5cb33a" stroke-width="2.2"/></svg>
<div class="a" style="left:675px;top:48px;width:1px;height:24px;background:#c9ced4;"></div>
<svg style="left:683px;top:50px;" width="22" height="21" viewBox="0 0 22 21"><path d="M3.5,3.5 L17,17" stroke="#3d7bbf" stroke-width="1.8"/><path d="M0.8,0.2 L7.2,2.8 L3.2,6.8 Z" fill="#3d7bbf"/><path d="M20.2,20 L13.8,17.4 L17.8,13.4 Z" fill="#3d7bbf"/></svg>
<svg style="left:713px;top:49px;" width="22" height="22" viewBox="0 0 22 22"><rect x="1.5" y="1.5" width="19.5" height="19.5" fill="#fff" stroke="#777" stroke-width="1"/><rect x="1.5" y="1.2" width="19.5" height="2.6" fill="#3d6fb8"/><text x="3" y="10.5" font-family="Liberation Mono" font-size="5.5" fill="#b8b8b8" letter-spacing="0.2">01001</text><text x="3" y="18" font-family="Liberation Mono" font-size="5.5" fill="#c8c8c8">10</text><rect x="12" y="12" width="9" height="9" fill="#fff" stroke="#777" stroke-width="1"/><path d="M13.5,17 L15.5,19 L19.5,14.5" stroke="#3d7bbf" stroke-width="1.5" fill="none"/></svg>
<svg style="left:744px;top:49px;" width="19" height="22" viewBox="0 0 19 22"><path d="M9.5,1 L18,4.3 V10.5 C18,15.5 14.5,18.5 9.5,21 C4.5,18.5 1,15.5 1,10.5 V4.3 Z" fill="#2ba9ec"/><path d="M6,11.5 L8.5,13.8 L13,9.2" stroke="#fff" stroke-width="1.8" fill="none"/></svg>
<svg style="left:775px;top:52px;" width="15" height="16" viewBox="0 0 15 16"><rect x="0.5" y="0.5" width="13.5" height="13.5" fill="#f4f2ee" stroke="#c0bdb8" stroke-width="1"/><path d="M3,2.8 L11.5,11.3 M11.5,2.8 L3,11.3" stroke="#e01010" stroke-width="0.9"/><circle cx="7.2" cy="7" r="0.9" fill="#e01010"/></svg>
<div class="a" style="left:797px;top:48px;width:1px;height:24px;background:#c9ced4;"></div>
<svg style="left:806px;top:52px;" width="16" height="16" viewBox="0 0 16 16"><rect x="1.5" y="1.5" width="13" height="13" fill="none" stroke="#d8d8d8" stroke-width="0.8"/><rect x="1.5" y="8" width="6.5" height="6.5" fill="#fff" stroke="#8c8c8c" stroke-width="1.3"/><path d="M8,8 L13.5,2.5" stroke="#a0a0a0" stroke-width="1.6"/><path d="M9.5,1 H15 V6.5 Z" fill="#a0a0a0"/></svg>
<svg style="left:1575px;top:88px;" width="9" height="6" viewBox="0 0 9 6"><path d="M1,5 L4.5,1.5 L8,5" stroke="#606060" stroke-width="2" fill="none"/></svg>
<svg style="left:1575px;top:483px;" width="9" height="6" viewBox="0 0 9 6"><path d="M1,1 L4.5,4.5 L8,1" stroke="#606060" stroke-width="2" fill="none"/></svg>
<svg style="left:339px;top:498px;" width="6" height="9" viewBox="0 0 6 9"><path d="M5,1 L1.5,4.5 L5,8" stroke="#606060" stroke-width="2" fill="none"/></svg>
<svg style="left:1559px;top:498px;" width="6" height="9" viewBox="0 0 6 9"><path d="M1,1 L4.5,4.5 L1,8" stroke="#606060" stroke-width="2" fill="none"/></svg>
<svg style="left:314px;top:178px;" width="9" height="6" viewBox="0 0 9 6"><path d="M1,5 L4.5,1.5 L8,5" stroke="#606060" stroke-width="2" fill="none"/></svg>
<svg style="left:314px;top:500px;" width="9" height="6" viewBox="0 0 9 6"><path d="M1,1 L4.5,4.5 L8,1" stroke="#606060" stroke-width="2" fill="none"/></svg>
<svg style="left:1599px;top:466px;" width="6" height="9" viewBox="0 0 6 9"><path d="M5,1 L1.5,4.5 L5,8" stroke="#606060" stroke-width="2" fill="none"/></svg>
<svg style="left:1878px;top:466px;" width="6" height="9" viewBox="0 0 6 9"><path d="M1,1 L4.5,4.5 L1,8" stroke="#606060" stroke-width="2" fill="none"/></svg>
<svg style="left:349.5px;top:82.5px;" width="15" height="15" viewBox="0 0 15 15"><rect x="0.5" y="0.5" width="13.5" height="13.5" rx="2.5" fill="#2f7dbd" stroke="#e6eef6" stroke-width="1"/><text x="7.3" y="10.5" text-anchor="middle" font-family="Liberation Sans" font-size="9" fill="#fff">S</text></svg>
<div class="a" style="left:351px;top:105.5px;width:181px;height:121.5px;border-radius:10px;background:#a8b9ce"></div>
<div class="a" style="left:346.5px;top:101.5px;width:181px;height:121px;border-radius:11px;background:#fff;overflow:hidden"><div class="a" style="left:0;top:0;width:181px;height:35px;background:#d59660"></div></div>
<div class="a" style="left:346.5px;top:136px;width:181px;height:1px;background:#e6c4a6;"></div>
<svg style="left:351px;top:106px;" width="25" height="25" viewBox="0 0 25 25"><circle cx="12.3" cy="12.3" r="12.2" fill="#fff"/><path d="M8,12 L12.5,9.5 L17,12 V17 L12.5,19.5 L8,17 Z" fill="#f6b820"/><path d="M12.5,14.3 V19.5 L17,17 V12 Z" fill="#f5a000"/><path d="M8,12 L12.5,14.5 L17,12 L12.5,9.5 Z" fill="#fcd34a"/><path d="M6,6.5 C9,5 12,6.5 13,10" stroke="#2fa04a" stroke-width="1.5" fill="none"/><path d="M11,9.2 L13.3,11.3 L14.5,8.3 Z" fill="#2fa04a"/></svg>
<div class="t" style="left:378.80px;top:111.75px;font-size:14px;line-height:14px;color:#ffffff;font-weight:bold;transform:scaleX(0.9431);transform-origin:0 0;">Variables</div>
<svg style="left:502px;top:110px;" width="18" height="18" viewBox="0 0 18 18"><circle cx="9" cy="9" r="8.6" fill="#8c6440"/><path d="M3.8,12 L9,4 L14.2,12 Z" fill="#fff"/></svg>
<svg style="left:367.5px;top:139.8px;" width="17" height="11" viewBox="0 0 17 11"><path d="M0.3,5 L5,0.5 H16.5 V9.8 H5 Z" fill="#ffc21a"/><path d="M0.3,5 L5,9.8 H16.5 V7.6 H6 Z" fill="#f0a800"/></svg>
<div class="t" style="left:388.00px;top:140.09px;font-size:11px;line-height:11px;color:#000000;-webkit-text-stroke:0.2px currentColor;transform:scaleX(0.9791);transform-origin:0 0;">username</div>
<div class="t" style="left:441.50px;top:140.09px;font-size:11px;line-height:11px;color:#808080;-webkit-text-stroke:0.2px currentColor;font-style:italic;transform:scaleX(0.9781);transform-origin:0 0;">NishaKazmi</div>
<div class="a" style="left:527.5px;top:142.3px;width:13px;height:6px;background:#d59660;"></div>
<svg style="left:367.5px;top:155.70000000000002px;" width="17" height="11" viewBox="0 0 17 11"><path d="M0.3,5 L5,0.5 H16.5 V9.8 H5 Z" fill="#ffc21a"/><path d="M0.3,5 L5,9.8 H16.5 V7.6 H6 Z" fill="#f0a800"/></svg>
<div class="t" style="left:388.00px;top:155.99px;font-size:11px;line-height:11px;color:#000000;-webkit-text-stroke:0.2px currentColor;">cursor</div>
<div class="a" style="left:527.5px;top:158.20000000000002px;width:13px;height:6px;background:#d59660;"></div>
<svg style="left:367.5px;top:171.6px;" width="17" height="11" viewBox="0 0 17 11"><path d="M0.3,5 L5,0.5 H16.5 V9.8 H5 Z" fill="#ffc21a"/><path d="M0.3,5 L5,9.8 H16.5 V7.6 H6 Z" fill="#f0a800"/></svg>
<div class="t" style="left:388.00px;top:171.89px;font-size:11px;line-height:11px;color:#000000;-webkit-text-stroke:0.2px currentColor;transform:scaleX(0.9709);transform-origin:0 0;">Accepts</div>
<div class="t" style="left:431.40px;top:171.89px;font-size:11px;line-height:11px;color:#808080;-webkit-text-stroke:0.2px currentColor;font-style:italic;transform:scaleX(0.9704);transform-origin:0 0;">application/json</div>
<div class="a" style="left:527.5px;top:174.1px;width:13px;height:6px;background:#d59660;"></div>
<svg style="left:367.5px;top:187.5px;" width="17" height="11" viewBox="0 0 17 11"><path d="M0.3,5 L5,0.5 H16.5 V9.8 H5 Z" fill="#ffc21a"/><path d="M0.3,5 L5,9.8 H16.5 V7.6 H6 Z" fill="#f0a800"/></svg>
<div class="t" style="left:388.00px;top:187.79px;font-size:11px;line-height:11px;color:#000000;-webkit-text-stroke:0.2px currentColor;transform:scaleX(0.9791);transform-origin:0 0;">UserAgent</div>
<div class="t" style="left:444.70px;top:187.79px;font-size:11px;line-height:11px;color:#808080;-webkit-text-stroke:0.2px currentColor;font-style:italic;transform:scaleX(0.9785);transform-origin:0 0;">Centerprise 9.0</div>
<div class="a" style="left:527.5px;top:190.0px;width:13px;height:6px;background:#d59660;"></div>
<svg style="left:0;top:0" width="1897" height="850"><g stroke="#dca06a" stroke-width="1.3" fill="none"><path d="M540,145.3 H620 Q629.5,145.3 629.5,155 V163 Q629.5,168.5 634,168.5"/><path d="M540,161.2 H622 Q629.5,161.2 629.5,166 Q629.5,168.5 634,168.5"/><path d="M540,177.1 H622 Q629.5,177.1 629.5,172 Q629.5,168.5 634,168.5"/><path d="M540,193 H620 Q629.5,193 629.5,183 V174 Q629.5,168.5 634,168.5"/><path d="M632,168.7 H710" stroke-width="2.2" stroke="#dd9a5c"/></g><path d="M719,168.8 L708.5,163.8 L711,168.8 L708.5,173.8 Z" fill="#dca06a"/></svg>
<div class="a" style="left:722.5px;top:141.5px;width:200px;height:37px;border-radius:11px;background:#a8b9ce"></div>
<div class="a" style="left:718.8px;top:137.7px;width:200px;height:37px;border-radius:11px;background:#a883b9"></div>
<svg style="left:720.8px;top:119.7px;" width="30" height="14.2" viewBox="0 0 30 14.2"><path d="M0,14.2 V5 Q0,0 5,0 H22.5 Q29.3,0 29.3,7 Q29.3,14.2 22.5,14.2 Z" fill="#3daa28"/><text x="14.3" y="10" text-anchor="middle" font-family="Liberation Sans" font-weight="bold" font-size="7.6" fill="#fff">GET</text></svg>
<svg style="left:723px;top:143px;" width="25" height="25" viewBox="0 0 25 25"><circle cx="12.5" cy="12.4" r="12.4" fill="#fff"/><rect x="4.5" y="5" width="6.5" height="12" fill="#34495e"/><g fill="#8fb0d0"><rect x="5.5" y="6.5" width="4.5" height="1"/><rect x="5.5" y="8.5" width="4.5" height="1"/><rect x="5.5" y="10.5" width="4.5" height="1"/><rect x="5.5" y="12.5" width="4.5" height="1"/></g><path d="M4,17.5 H11 M4,17.5 L6,15.8 M4,17.5 L6,19.2 M11,17.5 L9,19.5 " stroke="#3cb83c" stroke-width="1.6" fill="none"/><path d="M7.5,17.5 V20.5" stroke="#3cb83c" stroke-width="1.6"/><rect x="11.5" y="12" width="8.5" height="6.5" fill="#1d8fe0"/><path d="M11.5,18.5 L20,12 V18.5 Z" fill="#45b0f5"/><rect x="11" y="18.5" width="9.5" height="1.2" fill="#2a2a2a"/></svg>
<div class="t" style="left:751.00px;top:147.05px;font-size:14px;line-height:14px;color:#ffffff;font-weight:bold;transform:scaleX(0.9505);transform-origin:0 0;">API Flow</div>
<svg style="left:894.3px;top:146px;" width="18" height="18" viewBox="0 0 18 18"><circle cx="8.8" cy="8.8" r="8.7" fill="#7e5c90"/><path d="M3.6,5.5 L8.8,13.5 L14,5.5 Z" fill="#fff"/></svg>
<div class="a" style="left:722.7px;top:398.3px;width:200.5px;height:37px;border-radius:11px;background:#a8b9ce"></div>
<div class="a" style="left:719px;top:394.5px;width:200.5px;height:37px;border-radius:11px;background:#d59660"></div>
<svg style="left:723px;top:400px;" width="25" height="25" viewBox="0 0 25 25"><circle cx="12.4" cy="12.4" r="12.4" fill="#fff"/><circle cx="12" cy="12" r="7" fill="#4a90d9"/><path d="M7,8 C9,6 12,6.5 12,9 C12,11 9.5,10.5 9,13 C8.5,15 7,15 6,13.5 C5,11 5.5,9.5 7,8 Z M13,14 C15,13 17.5,13.5 17,16 C16,18 14,18.5 13,17.5 Z M14,6 C16,6.3 18,8 18.5,10 C17,10 15,9 14,6 Z" fill="#3cb46a"/><circle cx="15.5" cy="16.5" r="1.1" fill="#333"/><circle cx="18.8" cy="14.3" r="1.1" fill="#333"/><circle cx="18.8" cy="18.8" r="1.1" fill="#333"/><path d="M15.5,16.5 L18.8,14.3 M15.5,16.5 L18.8,18.8" stroke="#333" stroke-width="0.8"/></svg>
<div class="t" style="left:751.40px;top:405.55px;font-size:14px;line-height:14px;color:#ffffff;font-weight:bold;transform:scaleX(0.9227);transform-origin:0 0;">REST Connection</div>
<svg style="left:894.3px;top:403.5px;" width="18" height="18" viewBox="0 0 18 18"><circle cx="8.8" cy="8.8" r="8.7" fill="#8e6440"/><path d="M3.6,5.5 L8.8,13.5 L14,5.5 Z" fill="#fff"/></svg>
<svg style="left:1850px;top:22px;" width="7" height="4" viewBox="0 0 7 4"><path d="M0,0 H7 L3.5,4 Z" fill="#000"/></svg>
<svg style="left:1863.5px;top:19.5px;" width="9" height="10" viewBox="0 0 9 10"><path d="M2,1 H7 V6 M2,1 V6 M0.5,6.2 H8.5 M4.5,6.2 V9.5" stroke="#1e1e1e" stroke-width="1.4" fill="none"/></svg>
<svg style="left:1877.5px;top:19.5px;" width="9" height="9" viewBox="0 0 9 9"><path d="M1,1 L8,8 M8,1 L1,8" stroke="#1e1e1e" stroke-width="2.2"/></svg>
<svg style="left:1606px;top:53px;" width="18" height="16" viewBox="0 0 18 16"><rect x="0.5" y="0.5" width="17" height="15" fill="#fff" stroke="#777" stroke-width="1"/><rect x="0" y="0" width="18" height="3" fill="#2f5fa8"/><circle cx="4" cy="6.5" r="1" fill="#555"/><circle cx="4" cy="9.5" r="1" fill="none" stroke="#555" stroke-width="0.7"/><circle cx="4" cy="12.3" r="1" fill="none" stroke="#555" stroke-width="0.7"/><path d="M7,6.5 H16 M7,9.5 H16 M7,12.3 H16" stroke="#555" stroke-width="0.8"/><path d="M7,6.5 H16" stroke="#aaa" stroke-width="0.8"/></svg>
<svg style="left:1636px;top:53px;" width="20" height="18" viewBox="0 0 20 18"><rect x="0.5" y="0.5" width="17" height="15" fill="#fff" stroke="#888" stroke-width="1"/><rect x="0" y="0" width="18" height="3.2" fill="#4f87c6"/><rect x="10.8" y="9.5" width="8.5" height="8.3" fill="#e2512a"/><path d="M12.9,11.6 L17.2,15.7 M17.2,11.6 L12.9,15.7" stroke="#fff" stroke-width="1.3"/></svg>
<svg style="left:1666px;top:52px;" width="19" height="19" viewBox="0 0 19 19"><g fill="#2f5fa8"><path d="M3.2,0 V5 M2.5,0 H4"/></g><path d="M4,0.5 V5.5" stroke="#2f5fa8" stroke-width="1.6"/><path d="M1,4.5 L4,8.5 L7,4.5 Z" fill="#2f5fa8"/><path d="M14,0.5 V5.5" stroke="#2f5fa8" stroke-width="1.6"/><path d="M11,4.5 L14,8.5 L17,4.5 Z" fill="#2f5fa8"/><rect x="0.5" y="10.5" width="17.5" height="7.5" fill="#fff" stroke="#555" stroke-width="1"/><g fill="#333"><rect x="2" y="12.5" width="14.5" height="1" opacity="0.35"/><rect x="2" y="15.3" width="14.5" height="1" opacity="0.35"/><rect x="2.5" y="12.2" width="1.2" height="1.4"/><rect x="5.5" y="12.2" width="1.2" height="1.4"/><rect x="8.5" y="12.2" width="1.2" height="1.4"/><rect x="11.5" y="12.2" width="1.2" height="1.4"/><rect x="14.5" y="12.2" width="1.2" height="1.4"/><rect x="2.5" y="15" width="1.2" height="1.4"/><rect x="5.5" y="15" width="1.2" height="1.4"/><rect x="8.5" y="15" width="1.2" height="1.4"/><rect x="11.5" y="15" width="1.2" height="1.4"/><rect x="14.5" y="15" width="1.2" height="1.4"/></g></svg>
<svg style="left:1696px;top:52px;" width="19" height="19" viewBox="0 0 19 19"><g fill="#2f5fa8"><path d="M3.2,0 V5 M2.5,0 H4"/></g><path d="M4,0.5 V5.5" stroke="#2f5fa8" stroke-width="1.6"/><path d="M1,4.5 L4,8.5 L7,4.5 Z" fill="#2f5fa8"/><path d="M14,0.5 V5.5" stroke="#2f5fa8" stroke-width="1.6"/><path d="M11,4.5 L14,8.5 L17,4.5 Z" fill="#2f5fa8"/><rect x="0.5" y="10.5" width="17.5" height="7.5" fill="#fff" stroke="#555" stroke-width="1"/><g fill="#333"><rect x="2" y="12.5" width="14.5" height="1" opacity="0.35"/><rect x="2" y="15.3" width="14.5" height="1" opacity="0.35"/><rect x="2.5" y="12.2" width="1.2" height="1.4"/><rect x="5.5" y="12.2" width="1.2" height="1.4"/><rect x="8.5" y="12.2" width="1.2" height="1.4"/><rect x="11.5" y="12.2" width="1.2" height="1.4"/><rect x="14.5" y="12.2" width="1.2" height="1.4"/><rect x="2.5" y="15" width="1.2" height="1.4"/><rect x="5.5" y="15" width="1.2" height="1.4"/><rect x="8.5" y="15" width="1.2" height="1.4"/><rect x="11.5" y="15" width="1.2" height="1.4"/><rect x="14.5" y="15" width="1.2" height="1.4"/></g></svg>
<svg style="left:1724.5px;top:53px;" width="20" height="18" viewBox="0 0 20 18"><path d="M17.5,9 V0.5 H0.5 V15.5 H11" fill="#fff" stroke="#777" stroke-width="1"/><rect x="0" y="0" width="18" height="3" fill="#2f5fa8"/><path d="M9.5,12 L12.5,15 L19,8.5" stroke="#3a9a66" stroke-width="2.2" fill="none"/></svg>
<svg style="left:1755.5px;top:52px;" width="20" height="18" viewBox="0 0 20 18"><path d="M3.5,8 A6.6,6.6 0 0 1 16.3,7.2" stroke="#33c433" stroke-width="2" fill="none"/><path d="M16.5,10 A6.6,6.6 0 0 1 3.7,10.8" stroke="#33c433" stroke-width="2" fill="none"/><path d="M13.3,7.6 L19.7,7.6 L16.5,12 Z" fill="#33c433"/><path d="M0.3,10.4 L6.7,10.4 L3.5,6 Z" fill="#33c433"/></svg>
<svg style="left:1785px;top:51px;" width="21" height="20" viewBox="0 0 21 20"><rect x="0.5" y="0.5" width="19.5" height="19" fill="#fff" stroke="#555" stroke-width="1"/><rect x="0" y="0" width="20.5" height="2.2" fill="#2f5fa8"/><path d="M7.5,2 V19.5" stroke="#bbb" stroke-width="1.2"/><rect x="9.5" y="4.5" width="7.5" height="7" fill="#fff" stroke="#555" stroke-width="1"/><path d="M12,7 H16.5 M12,8.5 H16.5 M12,10 H16.5" stroke="#aaa" stroke-width="0.6"/><path d="M2.5,8 H6" stroke="#4f87c6" stroke-width="1"/><path d="M5,6 L7,8 L5,10 Z" fill="#4f87c6"/></svg>
<svg style="left:1815px;top:51px;" width="21" height="20" viewBox="0 0 21 20"><rect x="0.5" y="0.5" width="19.5" height="19" fill="#fff" stroke="#555" stroke-width="1"/><rect x="0" y="0" width="20.5" height="2.2" fill="#2f5fa8"/><path d="M7.5,2 V19.5" stroke="#bbb" stroke-width="1.2"/><rect x="9.5" y="4.5" width="7.5" height="7" fill="#fff" stroke="#555" stroke-width="1"/><path d="M12,7 H16.5 M12,8.5 H16.5 M12,10 H16.5" stroke="#aaa" stroke-width="0.6"/><path d="M1.5,8 H6.5" stroke="#4f87c6" stroke-width="1"/><path d="M5,6 L7,8 L5,10 Z M3,6 L1,8 L3,10 Z" fill="#4f87c6"/></svg>
<div class="a" style="left:1842px;top:49px;width:1px;height:23px;background:#c9ced4;"></div>
<svg style="left:1851px;top:51px;" width="21" height="20" viewBox="0 0 21 20"><rect x="3" y="2.5" width="17.5" height="17" fill="#f2f2f2" stroke="#c8c8c8" stroke-width="1"/><path d="M7,5 H11 M12.5,5 H19 M7,7.5 H11 M12.5,7.5 H19" stroke="#d0d0d0" stroke-width="1.2"/><rect x="5" y="10" width="14" height="8" fill="#fff" stroke="#c8c8c8" stroke-width="1"/><rect x="5" y="10" width="14" height="1.8" fill="#c8c8c8"/><circle cx="3.2" cy="2.8" r="2.5" fill="#b8b8b8"/></svg>
<svg style="left:1879px;top:56px;" width="8" height="16" viewBox="0 0 8 16"><circle cx="2.7" cy="2.2" r="1.8" fill="#3d6fb8"/><circle cx="2.7" cy="12.3" r="1.8" fill="#555"/><path d="M2.7,2.5 C5,5 5,9 2.7,12" stroke="#555" stroke-width="0.9" fill="none"/></svg>
<svg style="left:1855px;top:89px;" width="20" height="19" viewBox="0 0 20 19"><circle cx="7.5" cy="7.5" r="6.2" fill="none" stroke="#d9d9d9" stroke-width="1.8"/><path d="M12,12 L18,17.5" stroke="#d9d9d9" stroke-width="3" stroke-linecap="round"/><path d="M4.5,6 A3.5,3.5 0 0 1 7,3.8" stroke="#d9d9d9" stroke-width="1" fill="none"/></svg>
<svg style="left:1600px;top:128px;" width="11" height="7" viewBox="0 0 11 7"><path d="M1,1 L5.5,5.5 L10,1" stroke="#555" stroke-width="1.5" fill="none"/></svg>
<svg style="left:1618px;top:125px;" width="16" height="14" viewBox="0 0 16 14"><path d="M14.5,9.5 V2 M0.5,2 V12.5 H8.5" stroke="#aaa" stroke-width="1" fill="none"/><rect x="0" y="0" width="15" height="3" fill="#2f8bd0"/><path d="M9.3,11.3 H15" stroke="#2f5fdf" stroke-width="1.2"/><path d="M11.5,9 L9,11.3 L11.5,13.6" stroke="#2f5fdf" stroke-width="1.2" fill="none"/></svg>
<svg style="left:1619.5px;top:150px;" width="11" height="7" viewBox="0 0 11 7"><path d="M1,1 L5.5,5.5 L10,1" stroke="#555" stroke-width="1.5" fill="none"/></svg>
<svg style="left:1639px;top:148px;" width="11" height="10" viewBox="0 0 11 10"><path d="M0,1.5 Q0,0 1.5,0 H4 L5,1 H10 Q11,1 11,2 V9 H0 Z" fill="#ffcc00"/><rect x="0" y="8" width="11" height="1.5" fill="#d2be38"/></svg>
<svg style="left:1638.5px;top:172px;" width="11" height="7" viewBox="0 0 11 7"><path d="M1,1 L5.5,5.5 L10,1" stroke="#555" stroke-width="1.5" fill="none"/></svg>
<svg style="left:1658px;top:170px;" width="11" height="10" viewBox="0 0 11 10"><path d="M0,1.5 Q0,0 1.5,0 H4 L5,1 H10 Q11,1 11,2 V9 H0 Z" fill="#ffcc00"/><rect x="0" y="8" width="11" height="1.5" fill="#d2be38"/></svg>
<svg style="left:1660.5px;top:192px;" width="7" height="11" viewBox="0 0 7 11"><path d="M1,1 L5.5,5.5 L1,10" stroke="#8a8a8a" stroke-width="1.7" fill="none"/></svg>
<svg style="left:1673px;top:190px;" width="17" height="16" viewBox="0 0 17 16"><rect x="0.5" y="1.5" width="6" height="4.5" fill="#fff" stroke="#666" stroke-width="0.9"/><rect x="0.5" y="9.5" width="6" height="4.5" fill="#fff" stroke="#666" stroke-width="0.9"/><rect x="9.5" y="3" width="6" height="4.5" fill="#fff" stroke="#666" stroke-width="0.9"/><path d="M1.5,3.5 H5.5 M1.5,11.5 H5.5 M10.5,5 H14.5" stroke="#3d6fb8" stroke-width="0.8"/><path d="M3.5,6 V9.5 M6.5,4 H9.5" stroke="#888" stroke-width="0.8"/></svg>
<svg style="left:1621.5px;top:213px;" width="7" height="11" viewBox="0 0 7 11"><path d="M1,1 L5.5,5.5 L1,10" stroke="#8a8a8a" stroke-width="1.7" fill="none"/></svg>
<svg style="left:1639px;top:214px;" width="11" height="10" viewBox="0 0 11 10"><path d="M0,1.5 Q0,0 1.5,0 H4 L5,1 H10 Q11,1 11,2 V9 H0 Z" fill="#ffcc00"/><rect x="0" y="8" width="11" height="1.5" fill="#d2be38"/></svg>
<svg style="left:1621.5px;top:235px;" width="7" height="11" viewBox="0 0 7 11"><path d="M1,1 L5.5,5.5 L1,10" stroke="#8a8a8a" stroke-width="1.7" fill="none"/></svg>
<svg style="left:1639px;top:236px;" width="11" height="10" viewBox="0 0 11 10"><path d="M0,1.5 Q0,0 1.5,0 H4 L5,1 H10 Q11,1 11,2 V9 H0 Z" fill="#ffcc00"/><rect x="0" y="8" width="11" height="1.5" fill="#d2be38"/></svg>
<svg style="left:84px;top:532px" width="1758" height="6"><defs><pattern id="dots" x="0" y="0" width="4" height="4" patternUnits="userSpaceOnUse"><rect x="0" y="0" width="1" height="1" fill="#fff"/><rect x="2" y="2" width="1" height="1" fill="#fff"/></pattern></defs><rect x="0" y="0" width="1758" height="5" fill="url(#dots)"/></svg>
<svg style="left:1849.5px;top:532.5px;" width="7" height="4" viewBox="0 0 7 4"><path d="M0,0 H7 L3.5,4 Z" fill="#ffffff"/></svg>
<svg style="left:1863.5px;top:530px;" width="9" height="10" viewBox="0 0 9 10"><path d="M2,1 H7 V6 M2,1 V6 M0.5,6.2 H8.5 M4.5,6.2 V9.5" stroke="#ffffff" stroke-width="1.4" fill="none"/></svg>
<svg style="left:1877.5px;top:530px;" width="9" height="9" viewBox="0 0 9 9"><path d="M1,1 L8,8 M8,1 L1,8" stroke="#ffffff" stroke-width="2.2"/></svg>
<svg style="left:1851px;top:562px;" width="7" height="10" viewBox="0 0 7 10"><path d="M5.5,0.8 V9.2 L0.8,5 Z" fill="none" stroke="#1e1e1e" stroke-width="1"/></svg>
<svg style="left:1865.5px;top:562px;" width="7" height="10" viewBox="0 0 7 10"><path d="M1,0.8 V9.2 L5.7,5 Z" fill="none" stroke="#1e1e1e" stroke-width="1"/></svg>
<svg style="left:1878px;top:562.5px;" width="9" height="9" viewBox="0 0 9 9"><path d="M1,1 L8,8 M8,1 L1,8" stroke="#000" stroke-width="2.4"/></svg>
<svg style="left:20px;top:596px;" width="16" height="16" viewBox="0 0 16 16"><circle cx="8" cy="8" r="8" fill="#1e8fe6"/><path d="M4.5,8 L8,4.5 M4.5,8 L8,11.5 M4.8,8 H12" stroke="#fff" stroke-width="2" fill="none"/></svg>
<svg style="left:46px;top:596px;" width="17" height="16" viewBox="0 0 17 16"><rect x="0.5" y="0.5" width="15.5" height="11" fill="#fff" stroke="#1a1a6e" stroke-width="1"/><path d="M2.5,2.5 H8 M2.5,4.5 H6 M2.5,6.5 H12 M2.5,8.5 H9" stroke="#111" stroke-width="1"/><rect x="9" y="9" width="3" height="6.5" fill="#ffe020" stroke="#a05a00" stroke-width="0.8"/><rect x="13" y="9" width="3" height="6.5" fill="#ffe020" stroke="#a05a00" stroke-width="0.8"/></svg>
<svg style="left:71px;top:597px;" width="14" height="14" viewBox="0 0 14 14"><path d="M2,7 A5,5 0 0 1 11,4" stroke="#c8c8c8" stroke-width="2" fill="none"/><path d="M12,7 A5,5 0 0 1 3,10" stroke="#c8c8c8" stroke-width="2" fill="none"/><path d="M9,1 L13,2 L11,6 Z M5,13 L1,12 L3,8 Z" fill="#c8c8c8"/></svg>
<svg style="left:94px;top:596px;" width="16" height="16" viewBox="0 0 16 16"><circle cx="8" cy="8" r="8" fill="#1e8fe6"/><path d="M11.5,8 L8,4.5 M11.5,8 L8,11.5 M11.2,8 H4" stroke="#fff" stroke-width="2" fill="none"/></svg>
<svg style="left:120px;top:597px;" width="17" height="15" viewBox="0 0 17 15"><path d="M8.5,0.8 L16.3,14 H0.7 Z" fill="#f2e22e" stroke="#b8a818" stroke-width="0.9" stroke-linejoin="round"/><path d="M8.5,4.5 V9.5" stroke="#000" stroke-width="1.8"/><rect x="7.6" y="10.8" width="1.8" height="1.8" fill="#000"/></svg>
<svg style="left:146px;top:596px;" width="16" height="16" viewBox="0 0 16 16"><circle cx="8" cy="8" r="5.6" fill="none" stroke="#555" stroke-width="1.8"/><path d="M2,14.5 L14.5,1.5" stroke="#555" stroke-width="1.8"/></svg>
<div class="a" style="left:169px;top:592px;width:1px;height:24px;background:#c9ced4;"></div>
<svg style="left:279px;top:596px;" width="19" height="18" viewBox="0 0 19 18"><path d="M2.5,1 H5.5 V4 H7 V9 H11 V4 H12.5 V1 H15.5 V4 H16.5 V14 H10.5 V10.5 H7.5 V14 H0.5 V4 H2.5 Z" fill="#555"/><rect x="0.5" y="10" width="4" height="5" fill="#8a8a8a"/><path d="M9.5,14.2 H17" stroke="#2f6fb8" stroke-width="1.8"/><path d="M14.5,11 L18.3,14.2 L14.5,17.4" stroke="#2f6fb8" stroke-width="1.8" fill="none"/></svg>
<svg style="left:308.5px;top:596.5px;" width="15" height="15" viewBox="0 0 15 15"><circle cx="7.3" cy="7.3" r="7.2" fill="#b4b4b4"/><circle cx="7.3" cy="7.3" r="6.2" fill="#c4c4c4"/><path d="M4.5,4.5 L10.1,10.1 M10.1,4.5 L4.5,10.1" stroke="#fff" stroke-width="1.6"/></svg>
<svg style="left:16px;top:634px;" width="6" height="10" viewBox="0 0 6 10"><path d="M0.5,0.5 L5.5,5 L0.5,9.5 Z" fill="#333"/></svg>
</body></html>
